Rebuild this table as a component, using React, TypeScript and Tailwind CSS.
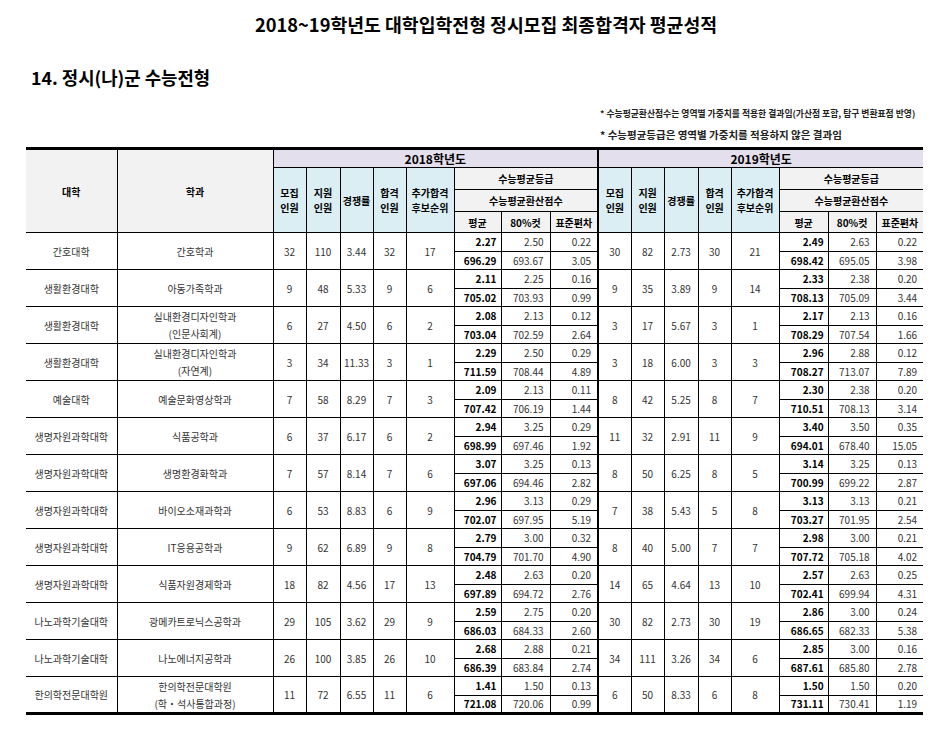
import React from 'react';

type Row = {
  college: string;
  dept: string[];
  a: (string | number)[];
  g18: string[];
  s18: string[];
  b: (string | number)[];
  g19: string[];
  s19: string[];
};

const rows: Row[] = [
  { college: '간호대학', dept: ['간호학과'], a: [32, 110, '3.44', 32, 17], g18: ['2.27', '2.50', '0.22'], s18: ['696.29', '693.67', '3.05'], b: [30, 82, '2.73', 30, 21], g19: ['2.49', '2.63', '0.22'], s19: ['698.42', '695.05', '3.98'] },
  { college: '생활환경대학', dept: ['아동가족학과'], a: [9, 48, '5.33', 9, 6], g18: ['2.11', '2.25', '0.16'], s18: ['705.02', '703.93', '0.99'], b: [9, 35, '3.89', 9, 14], g19: ['2.33', '2.38', '0.20'], s19: ['708.13', '705.09', '3.44'] },
  { college: '생활환경대학', dept: ['실내환경디자인학과', '(인문사회계)'], a: [6, 27, '4.50', 6, 2], g18: ['2.08', '2.13', '0.12'], s18: ['703.04', '702.59', '2.64'], b: [3, 17, '5.67', 3, 1], g19: ['2.17', '2.13', '0.16'], s19: ['708.29', '707.54', '1.66'] },
  { college: '생활환경대학', dept: ['실내환경디자인학과', '(자연계)'], a: [3, 34, '11.33', 3, 1], g18: ['2.29', '2.50', '0.29'], s18: ['711.59', '708.44', '4.89'], b: [3, 18, '6.00', 3, 3], g19: ['2.96', '2.88', '0.12'], s19: ['708.27', '713.07', '7.89'] },
  { college: '예술대학', dept: ['예술문화영상학과'], a: [7, 58, '8.29', 7, 3], g18: ['2.09', '2.13', '0.11'], s18: ['707.42', '706.19', '1.44'], b: [8, 42, '5.25', 8, 7], g19: ['2.30', '2.38', '0.20'], s19: ['710.51', '708.13', '3.14'] },
  { college: '생명자원과학대학', dept: ['식품공학과'], a: [6, 37, '6.17', 6, 2], g18: ['2.94', '3.25', '0.29'], s18: ['698.99', '697.46', '1.92'], b: [11, 32, '2.91', 11, 9], g19: ['3.40', '3.50', '0.35'], s19: ['694.01', '678.40', '15.05'] },
  { college: '생명자원과학대학', dept: ['생명환경화학과'], a: [7, 57, '8.14', 7, 6], g18: ['3.07', '3.25', '0.13'], s18: ['697.06', '694.46', '2.82'], b: [8, 50, '6.25', 8, 5], g19: ['3.14', '3.25', '0.13'], s19: ['700.99', '699.22', '2.87'] },
  { college: '생명자원과학대학', dept: ['바이오소재과학과'], a: [6, 53, '8.83', 6, 9], g18: ['2.96', '3.13', '0.29'], s18: ['702.07', '697.95', '5.19'], b: [7, 38, '5.43', 5, 8], g19: ['3.13', '3.13', '0.21'], s19: ['703.27', '701.95', '2.54'] },
  { college: '생명자원과학대학', dept: ['IT응용공학과'], a: [9, 62, '6.89', 9, 8], g18: ['2.79', '3.00', '0.32'], s18: ['704.79', '701.70', '4.90'], b: [8, 40, '5.00', 7, 7], g19: ['2.98', '3.00', '0.21'], s19: ['707.72', '705.18', '4.02'] },
  { college: '생명자원과학대학', dept: ['식품자원경제학과'], a: [18, 82, '4.56', 17, 13], g18: ['2.48', '2.63', '0.20'], s18: ['697.89', '694.72', '2.76'], b: [14, 65, '4.64', 13, 10], g19: ['2.57', '2.63', '0.25'], s19: ['702.41', '699.94', '4.31'] },
  { college: '나노과학기술대학', dept: ['광메카트로닉스공학과'], a: [29, 105, '3.62', 29, 9], g18: ['2.59', '2.75', '0.20'], s18: ['686.03', '684.33', '2.60'], b: [30, 82, '2.73', 30, 19], g19: ['2.86', '3.00', '0.24'], s19: ['686.65', '682.33', '5.38'] },
  { college: '나노과학기술대학', dept: ['나노에너지공학과'], a: [26, 100, '3.85', 26, 10], g18: ['2.68', '2.88', '0.21'], s18: ['686.39', '683.84', '2.74'], b: [34, 111, '3.26', 34, 6], g19: ['2.85', '3.00', '0.16'], s19: ['687.61', '685.80', '2.78'] },
  { college: '한의학전문대학원', dept: ['한의학전문대학원', '(학・석사통합과정)'], a: [11, 72, '6.55', 11, 6], g18: ['1.41', '1.50', '0.13'], s18: ['721.08', '720.06', '0.99'], b: [6, 50, '8.33', 6, 8], g19: ['1.50', '1.50', '0.20'], s19: ['731.11', '730.41', '1.19'] },
];

const widths = [91, 156, 33, 34, 33, 33, 48, 47, 49, 48, 33, 33, 34, 33, 48, 49, 48, 47];

const bd = 'border border-black';
const th = `${bd} font-bold text-black p-0 text-center align-middle leading-[15px]`;
const td = `${bd} p-0 text-center align-middle text-[#333]`;
const sub = `${bd} p-0 text-right align-middle h-[18.5px]`;

// one group of five count columns (모집/지원/경쟁률/합격/추가합격)
const countHeads = (thick: boolean) => [
  ['모집', '인원'],
  ['지원', '인원'],
  ['경쟁률'],
  ['합격', '인원'],
  ['추가합격', '후보순위'],
].map((lines, i) => (
  <td key={i} rowSpan={3} className={`${th} bg-[#daeef3] ${thick && i === 0 ? 'border-l-2' : ''}`}>
    {lines.map((l) => (
      <div key={l}>{l}</div>
    ))}
  </td>
));

const gradeCells = (vals: string[], last: boolean) =>
  vals.map((v, i) => (
    <td
      key={i}
      className={`${sub} ${i === 0 ? 'font-bold text-black pr-[4px]' : 'text-[#333] pr-[6px]'} ${last && i === 2 ? 'border-r-0' : ''}`}
    >
      {v}
    </td>
  ));

export default function App() {
  return (
    <div
      className="w-[952px] h-[742px] bg-white text-black overflow-hidden"
      style={{ fontFamily: '"Noto Sans CJK KR", "Noto Sans", sans-serif' }}
    >
      <h1 className="pt-[12px] pl-[20px] text-center text-[18.3px] font-bold leading-[24px]">
        2018~19학년도 대학입학전형 정시모집 최종합격자 평균성적
      </h1>
      <h2 className="mt-[29px] pl-[31px] text-[17.8px] font-bold leading-[24px]">14. 정시(나)군 수능전형</h2>
      <p className="mt-[19px] ml-[600px] text-[8.8px] font-semibold leading-[12px] text-[#222] whitespace-nowrap">
        * 수능평균환산점수는 영역별 가중치를 적용한 결과임(가산점 포함, 탐구 변환표점 반영)
      </p>
      <p className="mt-[8px] ml-[600px] text-[10.5px] font-semibold leading-[14px] text-[#222] whitespace-nowrap">
        * 수능평균등급은 영역별 가중치를 적용하지 않은 결과임
      </p>

      <table className="mt-[5px] ml-[26px] w-[897px] table-fixed border-collapse text-[10px]">
        <colgroup>
          {widths.map((w, i) => (
            <col key={i} style={{ width: w }} />
          ))}
        </colgroup>
        <thead>
          <tr>
            <td rowSpan={4} className={`${th} bg-[#f2f2f2] border-l-0 border-t-[3px]`}>대학</td>
            <td rowSpan={4} className={`${th} bg-[#f2f2f2] border-t-[3px]`}>학과</td>
            <td colSpan={8} className={`${th} bg-[#e4dfec] border-t-[3px] h-[19px] text-[12px]`}>2018학년도</td>
            <td colSpan={8} className={`${th} bg-[#e4dfec] border-t-[3px] border-l-2 border-r-0 text-[12px]`}>2019학년도</td>
          </tr>
          <tr>
            {countHeads(false)}
            <td colSpan={3} className={`${th} bg-[#f2f2f2] h-[22px]`}>수능평균등급</td>
            {countHeads(true)}
            <td colSpan={3} className={`${th} bg-[#f2f2f2] border-r-0`}>수능평균등급</td>
          </tr>
          <tr>
            <td colSpan={3} className={`${th} bg-[#f2f2f2] h-[22px]`}>수능평균환산점수</td>
            <td colSpan={3} className={`${th} bg-[#f2f2f2] border-r-0`}>수능평균환산점수</td>
          </tr>
          <tr>
            <td className={`${th} bg-[#f2f2f2] h-[21px]`}>평균</td>
            <td className={`${th} bg-[#f2f2f2]`}>80%컷</td>
            <td className={`${th} bg-[#f2f2f2]`}>표준편차</td>
            <td className={`${th} bg-[#f2f2f2]`}>평균</td>
            <td className={`${th} bg-[#f2f2f2]`}>80%컷</td>
            <td className={`${th} bg-[#f2f2f2] border-r-0`}>표준편차</td>
          </tr>
        </thead>
        <tbody>
          {rows.map((r, ri) => {
            const lastRow = ri === rows.length - 1;
            const bb = lastRow ? 'border-b-[3px]' : '';
            return (
              <React.Fragment key={ri}>
                <tr>
                  <td rowSpan={2} className={`${td} border-l-0 ${bb}`}>{r.college}</td>
                  <td rowSpan={2} className={`${td} leading-[17px] ${bb}`}>
                    {r.dept.map((d) => (
                      <div key={d}>{d}</div>
                    ))}
                  </td>
                  {r.a.map((v, i) => (
                    <td key={i} rowSpan={2} className={`${td} ${bb}`}>{v}</td>
                  ))}
                  {gradeCells(r.g18, false)}
                  {r.b.map((v, i) => (
                    <td key={i} rowSpan={2} className={`${td} ${bb} ${i === 0 ? 'border-l-2' : ''}`}>{v}</td>
                  ))}
                  {gradeCells(r.g19, true)}
                </tr>
                <tr className={lastRow ? '[&>td]:border-b-[3px]' : ''}>
                  {gradeCells(r.s18, false)}
                  {gradeCells(r.s19, true)}
                </tr>
              </React.Fragment>
            );
          })}
        </tbody>
      </table>
    </div>
  );
}
